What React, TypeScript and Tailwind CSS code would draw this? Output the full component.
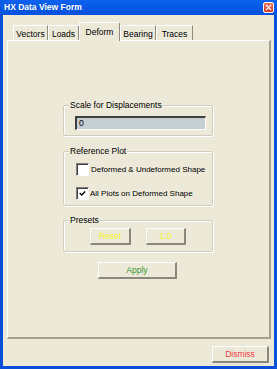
export default function App() {
  const tabs = ["Vectors", "Loads", "Deform", "Bearing", "Traces"];
  const active = "Deform";

  return (
    <div className="flex h-[369px] w-[277px] flex-col bg-[#0A4FD8] font-['Liberation_Sans',Arial,sans-serif] text-[8.5px] text-black">
      {/* title bar */}
      <div className="flex h-[15px] items-center bg-gradient-to-b from-[#0B62EE] to-[#0450DC] pl-[4px] pr-[3px]">
        <span className="text-[8.5px] font-bold leading-none text-white">HX Data View Form</span>
        <span className="ml-auto flex h-[11px] w-[11px] items-center justify-center rounded-[2px] border border-white bg-gradient-to-b from-[#E8705A] to-[#D23A1C]">
          <svg viewBox="0 0 8 8" className="h-[7px] w-[7px]">
            <path d="M1 1l6 6M7 1L1 7" stroke="#fff" strokeWidth="1.6" />
          </svg>
        </span>
      </div>

      {/* body */}
      <div className="mx-[3px] mb-[3px] flex flex-1 flex-col bg-[#ECE9D8]">
        {/* tab strip */}
        <div className="flex h-[25px] items-end pl-[10px]">
          {tabs.map((t) =>
            t === active ? (
              <div
                key={t}
                className="relative z-10 -mb-px flex h-[19px] w-[41px] items-start justify-center rounded-t-[2px] border-l border-r border-t border-l-white border-r-[#8F8C7D] border-t-white bg-[#ECE9D8] pt-[5px] leading-none"
              >
                {t}
              </div>
            ) : (
              <div
                key={t}
                className={`flex h-[15px] items-start justify-center border-l border-r border-t border-l-white border-r-[#8F8C7D] border-t-white pt-[4px] leading-none ${
                  t === "Vectors" ? "w-[35px]" : t === "Loads" ? "w-[31px]" : t === "Bearing" ? "w-[36px]" : "w-[37px]"
                }`}
              >
                {t}
              </div>
            ),
          )}
        </div>

        {/* tab panel */}
        <div className="ml-[4px] mr-[3px] h-[299px] border-b-2 border-l border-r-2 border-t border-b-[#A3A08E] border-l-white border-r-[#A3A08E] border-t-white pl-[55px]">
          {/* Scale for Displacements */}
          <div className="relative mt-[64px] h-[31px] w-[150px] rounded-[2px] border border-[#CFCDBF] shadow-[inset_1px_1px_0_#fff,1px_1px_0_#fff]">
            <span className="absolute -top-[5px] left-[5px] whitespace-nowrap bg-[#ECE9D8] px-px leading-none">Scale for Displacements</span>
            <div className="ml-[11px] mt-[10px] flex h-[14px] w-[131px] items-center border-l-2 border-t-2 border-b border-r border-b-white border-l-[#404040] border-r-white border-t-[#404040] bg-[#C5CFD1] pl-[2px] leading-none">
              0
            </div>
          </div>

          {/* Reference Plot */}
          <div className="relative mt-[15px] h-[55px] w-[150px] rounded-[2px] border border-[#CFCDBF] shadow-[inset_1px_1px_0_#fff,1px_1px_0_#fff]">
            <span className="absolute -top-[5px] left-[5px] whitespace-nowrap bg-[#ECE9D8] px-px leading-none">Reference Plot</span>
            <div className="ml-[12px] mt-[11px] flex items-center gap-[2px] whitespace-nowrap text-[8px] leading-none">
              <span className="h-[13px] w-[13px] shrink-0 border-l border-t border-b border-r border-b-white border-l-[#808080] border-r-white border-t-[#808080] bg-white shadow-[inset_1px_1px_0_#404040]" />
              <span>Deformed &amp; Undeformed Shape</span>
            </div>
            <div className="ml-[12px] mt-[11px] flex items-center gap-[1px] whitespace-nowrap text-[8px] leading-none">
              <span className="flex h-[13px] w-[13px] shrink-0 items-center justify-center border-l border-t border-b border-r border-b-white border-l-[#808080] border-r-white border-t-[#808080] bg-white shadow-[inset_1px_1px_0_#404040]">
                <svg viewBox="0 0 9 9" className="h-[7px] w-[7px]">
                  <path d="M1 4l2.5 2.5L8 2" fill="none" stroke="#000" strokeWidth="1.8" />
                </svg>
              </span>
              <span>All Plots on Deformed Shape</span>
            </div>
          </div>

          {/* Presets */}
          <div className="relative mt-[14px] h-[32px] w-[150px] rounded-[2px] border border-[#CFCDBF] shadow-[inset_1px_1px_0_#fff,1px_1px_0_#fff]">
            <span className="absolute -top-[5px] left-[5px] whitespace-nowrap bg-[#ECE9D8] px-px leading-none">Presets</span>
            <div className="ml-[26px] mt-[7px] flex gap-[15px]">
              <WinButton className="w-[41px] text-[#F6F62A]">Reset</WinButton>
              <WinButton className="w-[40px] text-[#F6F62A]">1.0</WinButton>
            </div>
          </div>

          {/* Apply */}
          <WinButton className="ml-[35px] mt-[10px] w-[79px] text-[#349A34]">Apply</WinButton>
        </div>

        <div className="mr-[5px] mt-[7px] flex justify-end">
          <WinButton className="w-[57px] text-[#F2404C]">Dismiss</WinButton>
        </div>
      </div>
    </div>
  );
}

function WinButton({ className, children }: { className: string; children: React.ReactNode }) {
  return (
    <div
      className={`flex h-[17px] items-center justify-center border-b-2 border-l border-r-2 border-t border-b-[#8A887A] border-l-white border-r-[#8A887A] border-t-white bg-[#ECE9D8] leading-none ${className}`}
    >
      {children}
    </div>
  );
}
